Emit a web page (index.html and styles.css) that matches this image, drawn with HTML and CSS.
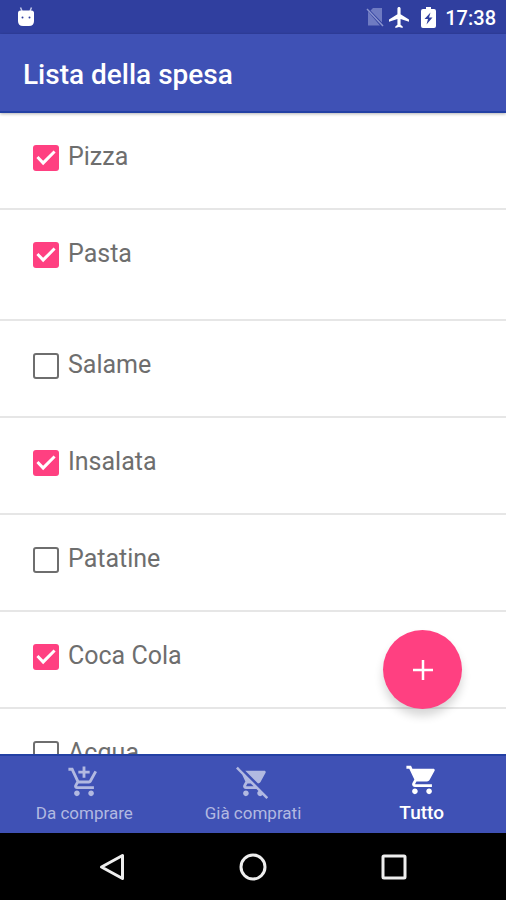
FILE: index.html
```html
<!DOCTYPE html>
<html lang="it">
<head>
<meta charset="utf-8">
<meta name="viewport" content="width=device-width, initial-scale=1">
<title>Lista della spesa</title>
<link rel="stylesheet" href="styles.css">
</head>
<body>
<div class="status-bar">
  <svg class="status-debug" viewBox="0 0 18 20" width="18" height="20" aria-hidden="true">
    <path d="M3.500 .5 5 4M14.500 .5 13 4" stroke="#c5cae9" stroke-width="1.500"/>
    <path d="M1 6q0-2.500 2.500-2.500h11q2.500 0 2.500 2.500v8q0 5-5 5h-6q-5 0-5-5z" fill="#fff"/>
    <circle cx="5.500" cy="10.500" r="1" fill="#303f9f"/><circle cx="12.500" cy="10.500" r="1" fill="#303f9f"/>
  </svg>
  <svg class="status-sim" viewBox="0 0 18 20" width="18" height="20" aria-hidden="true">
    <path d="M7 1h9v14.500L4.500 3.500zM2 4.500l12 14H2z" fill="#6f7bc2"/>
    <path d="M1 2l16 17" stroke="#8b95cf" stroke-width="1.500"/>
  </svg>
  <svg class="status-plane" viewBox="2 2 19 20" width="20" height="21" aria-hidden="true">
    <path d="M21 16v-2l-8-5V3.500c0-.83-.67-1.500-1.500-1.500S10 2.670 10 3.500V9l-8 5v2l8-2.500V19l-2 1.500V22l3.500-1 3.500 1v-1.500L13 19v-5.500l8 2.500z" fill="#fff"/>
  </svg>
  <svg class="status-battery" viewBox="0 0 15 21" width="15" height="21" aria-hidden="true">
    <path d="M5 0h5v2h3q2 0 2 2v15q0 2-2 2H2q-2 0-2-2V4q0-2 2-2h3z" fill="#fff"/>
    <path d="M9.500 5.500 3.500 12h3.500l-1.500 5.500 6-7H8z" fill="#303f9f"/>
  </svg>
  <span class="clock">17:38</span>
</div>
<header class="app-bar"><h1>Lista della spesa</h1></header>
<main class="content">
  <ul class="list">
    <li class="item"><label><input type="checkbox" checked>Pizza</label></li>
    <li class="item item-tall"><label><input type="checkbox" checked>Pasta</label></li>
    <li class="item"><label><input type="checkbox">Salame</label></li>
    <li class="item"><label><input type="checkbox" checked>Insalata</label></li>
    <li class="item"><label><input type="checkbox">Patatine</label></li>
    <li class="item"><label><input type="checkbox" checked>Coca Cola</label></li>
    <li class="item"><label><input type="checkbox">Acqua</label></li>
  </ul>
  <button class="fab" type="button" aria-label="Aggiungi">
    <svg viewBox="0 0 22 22" width="22" height="22" aria-hidden="true"><path d="M11 1v20M1 11h20" stroke="#fff" stroke-width="2.500"/></svg>
  </button>
</main>
<nav class="tabs">
  <a class="tab" href="#da-comprare">
    <svg viewBox="0 0 24 24" width="34" height="34" aria-hidden="true"><path d="M11 9h2V6h3V4h-3V1h-2v3H8v2h3v3zm-4 9c-1.100 0-1.990.9-1.990 2S5.900 22 7 22s2-.9 2-2-.9-2-2-2zm10 0c-1.100 0-1.990.9-1.990 2s.89 2 1.990 2 2-.9 2-2-.9-2-2-2zm-9.830-3.250l.03-.12.9-1.630h7.450c.75 0 1.410-.41 1.750-1.030l3.860-7.010L19.420 4h-.01l-1.100 2-2.760 5H8.530l-.13-.27L6.160 6l-.95-2-.94-2H1v2h2l3.600 7.590-1.350 2.450c-.16.28-.25.61-.25.960 0 1.100.9 2 2 2h12v-2H7.420c-.13 0-.25-.11-.25-.25z"/></svg>
    <span>Da comprare</span>
  </a>
  <a class="tab" href="#gia-comprati">
    <svg viewBox="0 0 24 24" width="34" height="34" aria-hidden="true"><path d="M22.730 22.730L2.770 2.770 2 2l-.73-.73L0 2.540l4.390 4.390 2.210 4.660-1.350 2.450c-.16.280-.25.610-.25.960 0 1.100.9 2 2 2h7.460l1.380 1.380c-.5.360-.83.950-.83 1.620 0 1.100.89 2 1.990 2 .67 0 1.260-.33 1.620-.84L21.460 24l1.270-1.270zM7.420 15c-.14 0-.25-.11-.25-.25l.03-.12.9-1.630h2.360l2 2H7.420zm8.130-2c.75 0 1.410-.41 1.750-1.030l3.580-6.490c.08-.14.12-.31.12-.48 0-.55-.45-1-1-1H6.540l9.010 9zM7 18c-1.100 0-1.990.9-1.990 2S5.900 22 7 22s2-.9 2-2-.9-2-2-2z"/></svg>
    <span>Già comprati</span>
  </a>
  <a class="tab tab-active" href="#tutto" aria-current="page">
    <svg viewBox="0 0 24 24" width="34" height="34" aria-hidden="true"><path d="M7 18c-1.100 0-1.990.9-1.990 2S5.900 22 7 22s2-.9 2-2-.9-2-2-2zM1 2v2h2l3.600 7.590-1.350 2.450c-.16.280-.25.610-.25.960 0 1.100.9 2 2 2h12v-2H7.420c-.14 0-.25-.11-.25-.25l.03-.12.9-1.630h7.450c.75 0 1.410-.41 1.750-1.030l3.580-6.490c.08-.14.12-.31.12-.48 0-.55-.45-1-1-1H5.210l-.94-2H1zm16 16c-1.100 0-1.990.9-1.990 2s.89 2 1.990 2 2-.9 2-2-.9-2-2-2z"/></svg>
    <span>Tutto</span>
  </a>
</nav>
<div class="system-bar">
  <button type="button" aria-label="Indietro"><svg viewBox="0 0 28 28" width="28" height="28" aria-hidden="true"><path d="M24.500 2.500v23L3.500 14z"/></svg></button>
  <button type="button" aria-label="Home"><svg viewBox="0 0 28 28" width="28" height="28" aria-hidden="true"><circle cx="14" cy="14" r="12"/></svg></button>
  <button type="button" aria-label="Recenti"><svg viewBox="0 0 28 28" width="28" height="28" aria-hidden="true"><rect x="3" y="3" width="22" height="22" rx="1"/></svg></button>
</div>
</body>
</html>
```
FILE: styles.css
```css
* {
  box-sizing: border-box;
}

body {
  margin: 0;
  height: 100vh;
  display: flex;
  flex-direction: column;
  background: #fff;
  font-family: Roboto, "Liberation Sans", sans-serif;
}

button {
  border: 0;
  padding: 0;
  background: none;
  display: grid;
  place-items: center;
}

svg {
  display: block;
  fill: none;
}

.status-bar {
  flex: none;
  height: 34px;
  padding: 0 10px 0 17px;
  display: flex;
  align-items: center;
  background: #303f9f;
  color: #fff;
}

.status-debug {
  margin-right: auto;
}

.status-plane {
  margin-left: 5px;
}

.status-battery {
  margin-left: 12px;
}

.clock {
  margin-left: 9px;
  padding-top: 2px;
  font-size: 20px;
  font-weight: 500;
  line-height: 32px;
}

.app-bar {
  flex: none;
  position: relative;
  z-index: 1;
  height: 79px;
  padding: 0 23px;
  display: flex;
  align-items: center;
  background: #3f51b5;
  border-bottom: 2px solid #2340a4;
  box-shadow: 0 1px 3px rgba(0, 0, 0, 0.3);
  color: #fff;
}

.app-bar h1 {
  margin: 0;
  padding-top: 4px;
  font-size: 28px;
  font-weight: 500;
  line-height: 32px;
}

.content {
  flex: 1;
  min-height: 0;
  position: relative;
  overflow: hidden;
}

.list {
  margin: 0;
  padding: 0;
  list-style: none;
}

.item {
  height: 97px;
  padding: 28px 33px 0;
  border-bottom: 2px solid #e6e6e6;
}

.item-tall {
  height: 111px;
}

.item label {
  display: flex;
  align-items: center;
  gap: 9px;
  color: #6e6e6e;
  font-size: 25px;
  line-height: 32px;
}

.item input {
  appearance: none;
  flex: none;
  width: 26px;
  height: 26px;
  margin: 2px 0 0;
  border: 2px solid #6e6e6e;
  border-radius: 3px;
  display: grid;
}

.item input:checked {
  border: 0;
  background: #ff4081;
}

.item input:checked::before {
  content: "";
  background: #fff;
  clip-path: polygon(13% 50%, 21% 42%, 39% 61%, 79% 21%, 87% 29%, 39% 78%);
}

.fab {
  position: absolute;
  right: 44px;
  bottom: 45px;
  width: 79px;
  height: 79px;
  border-radius: 50%;
  background: #ff4081;
  box-shadow: 0 7px 10px rgba(0, 0, 0, 0.16);
}

.tabs {
  flex: none;
  height: 79px;
  display: grid;
  grid-template-columns: repeat(3, 1fr);
  background: #3f51b5;
  border-top: 2px solid #2340a4;
}

.tab {
  display: flex;
  flex-direction: column;
  align-items: center;
  padding-top: 9px;
  color: #b2b9e1;
  font-size: 17px;
  line-height: 28px;
  text-decoration: none;
}

.tab svg {
  fill: currentColor;
}

.tab-active {
  padding-top: 7px;
  color: #fff;
  font-size: 19px;
  font-weight: 500;
  line-height: 32px;
}

.system-bar {
  flex: none;
  height: 67px;
  padding: 0 42px;
  display: grid;
  grid-template-columns: repeat(3, 1fr);
  background: #000;
}

.system-bar svg {
  stroke: #eee;
  stroke-width: 3;
  stroke-linejoin: round;
}
```
